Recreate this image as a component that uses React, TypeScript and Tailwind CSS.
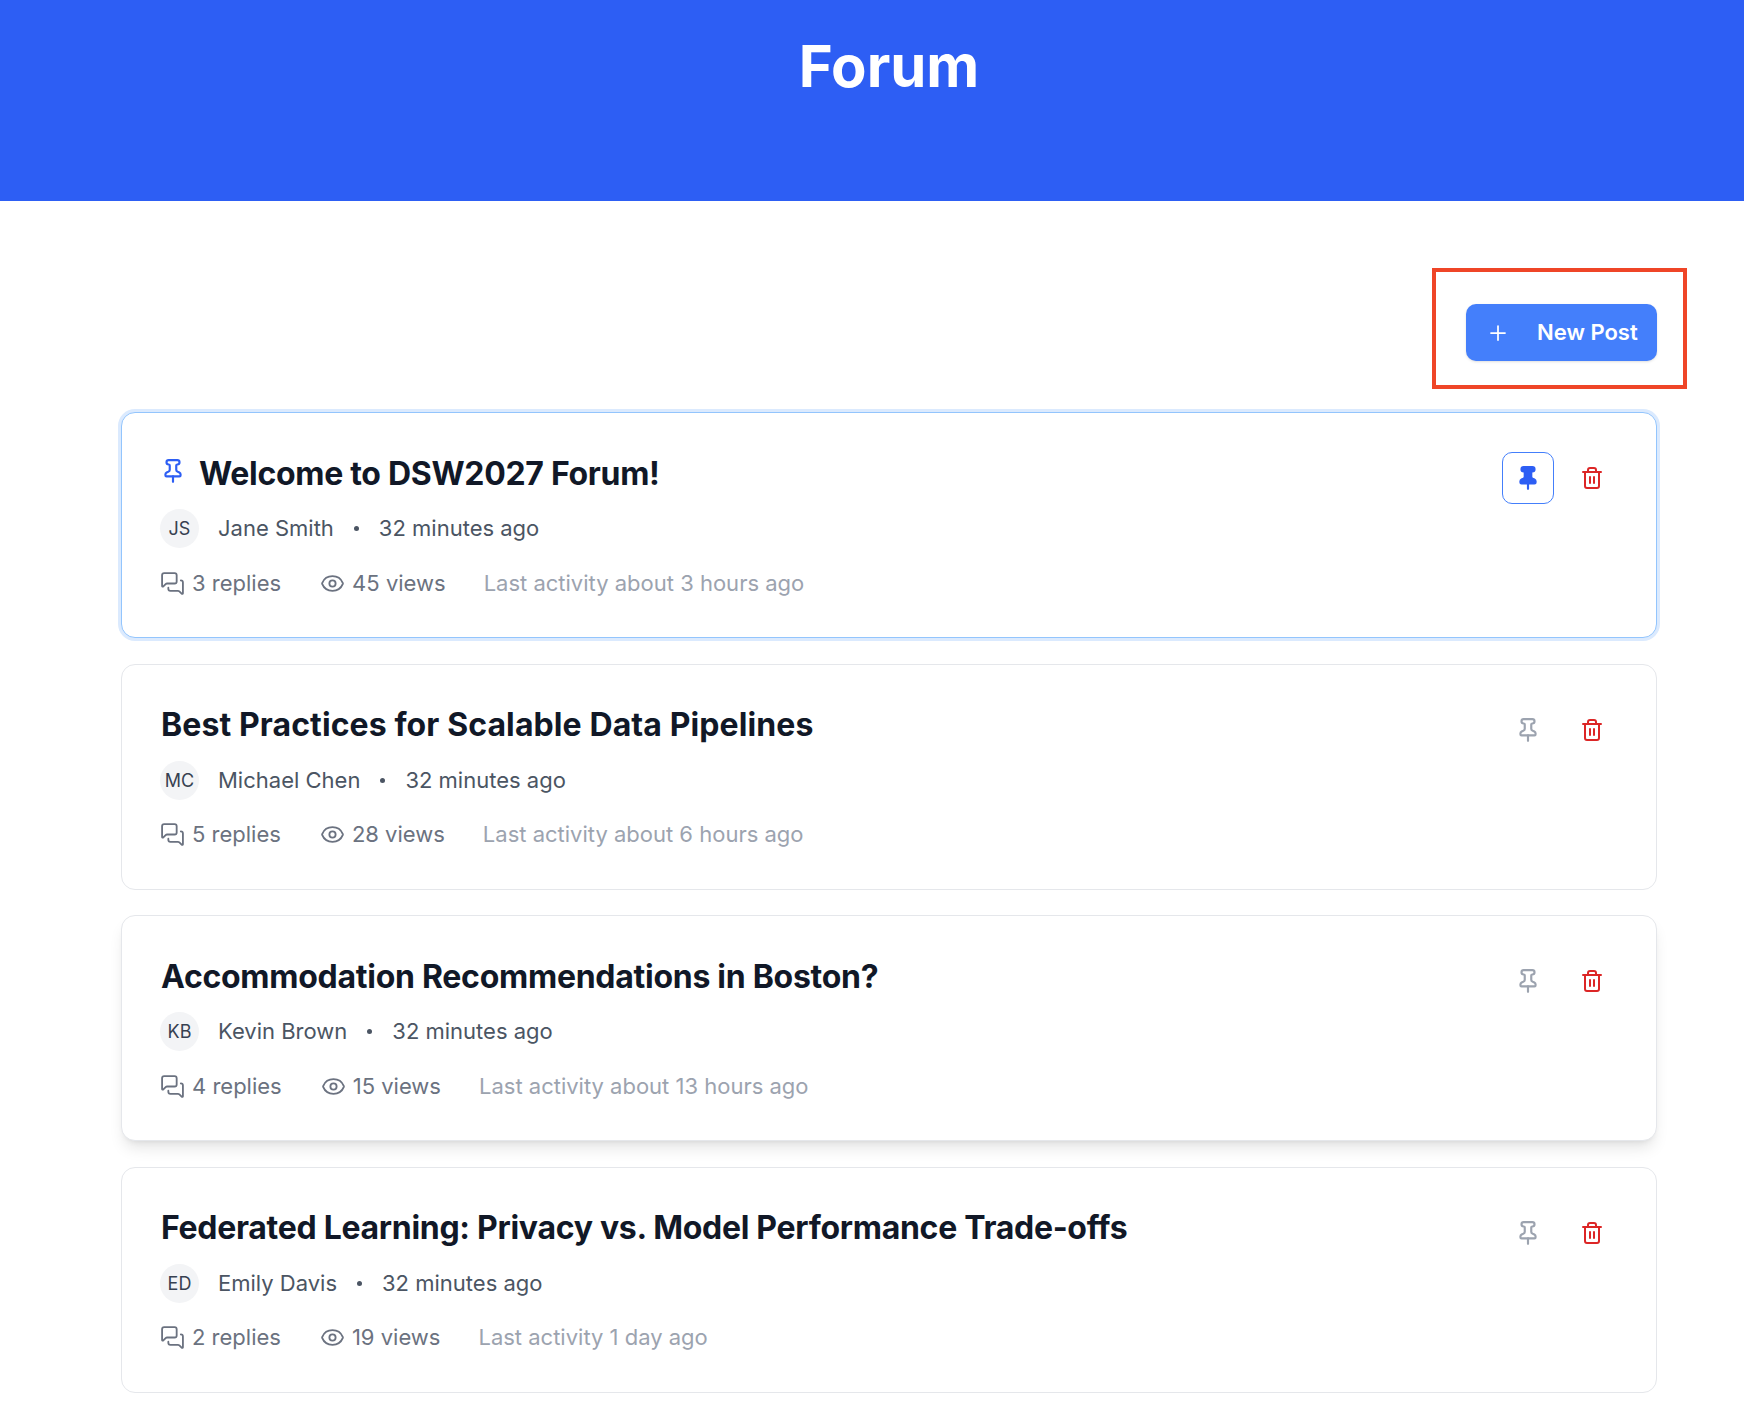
import { Eye, MessagesSquare, Pin, Plus, Trash2 } from "lucide-react";

type Post = {
  title: string;
  titleClass: string;
  initials: string;
  author: string;
  replies: number;
  views: number;
  activity: string;
  pinned?: boolean;
  raised?: boolean;
};

const posts: Post[] = [
  { title: "Welcome to DSW2027 Forum!", titleClass: "tracking-[-0.3px]", initials: "JS", author: "Jane Smith", replies: 3, views: 45, activity: "Last activity about 3 hours ago", pinned: true },
  { title: "Best Practices for Scalable Data Pipelines", titleClass: "tracking-[0.1px]", initials: "MC", author: "Michael Chen", replies: 5, views: 28, activity: "Last activity about 6 hours ago" },
  { title: "Accommodation Recommendations in Boston?", titleClass: "tracking-[-0.27px]", initials: "KB", author: "Kevin Brown", replies: 4, views: 15, activity: "Last activity about 13 hours ago", raised: true },
  { title: "Federated Learning: Privacy vs. Model Performance Trade-offs", titleClass: "tracking-[-0.29px]", initials: "ED", author: "Emily Davis", replies: 2, views: 19, activity: "Last activity 1 day ago" },
];

function PostCard({ post }: { post: Post }) {
  let cardClass = "border-[#e5e7eb]";
  if (post.pinned) cardClass = "border-[#93c5fd] shadow-[0_0_0_3px_#dbeafe]";
  if (post.raised) cardClass = "border-[#e5e7eb] shadow-lg";

  return (
    <div className={`h-[226px] rounded-[14px] border bg-white pl-[38px] pr-[39px] pt-[40px] flex justify-between ${cardClass}`}>
      <div>
        <div className="flex items-center h-[42px]">
          {post.pinned && <Pin className="w-[26px] h-[26px] text-[#2d5ef4] mr-[12px] -mt-[6px]" strokeWidth={2} />}
          <h2 className={`pl-px -mt-[1px] text-[32px] leading-[42px] font-bold text-[#111827] ${post.titleClass}`}>{post.title}</h2>
        </div>
        <div className="flex items-center mt-[14px] h-[39px] text-[22px] text-[#4b5563]">
          <div className="w-[39px] h-[39px] rounded-full bg-[#f3f4f6] flex items-center justify-center text-[18px] text-[#374151]">
            {post.initials}
          </div>
          <span className="ml-[19px]">{post.author}</span>
          <span className="w-[5px] h-[5px] rounded-full bg-[#4b5563] ml-[20px] mr-[20px]" />
          <span>32 minutes ago</span>
        </div>
        <div className="flex items-center mt-[16px] h-[38px] text-[22px] text-[#6b7280]">
          <MessagesSquare className="w-[25px] h-[25px]" strokeWidth={1.75} />
          <span className="ml-[7px]">{post.replies} replies</span>
          <Eye className="w-[25px] h-[25px] ml-[39px]" strokeWidth={1.75} />
          <span className="ml-[7px]">{post.views} views</span>
          <span className="ml-[38px] text-[#9ca3af]">{post.activity}</span>
        </div>
      </div>
      <div className="flex items-start gap-[26px] -mt-[1px] pr-[13px]">
        {post.pinned ? (
          <button className="w-[52px] h-[52px] rounded-[10px] border border-[#447ffb] flex items-center justify-center">
            <Pin className="w-[26px] h-[26px] text-[#2d5ef4]" fill="currentColor" strokeWidth={2} />
          </button>
        ) : (
          <button className="w-[52px] h-[52px] flex items-center justify-center">
            <Pin className="w-[26px] h-[26px] text-[#9ca3af]" strokeWidth={2} />
          </button>
        )}
        <button className="w-[24px] h-[52px] flex items-center justify-center">
          <Trash2 className="w-[26px] h-[26px] text-[#dc2626]" strokeWidth={2} />
        </button>
      </div>
    </div>
  );
}

export default function App() {
  return (
    <div className="min-h-[1406px] bg-white font-['Inter',sans-serif]">
      <header className="h-[201px] bg-[#2d5ef4] pl-[34px] pt-[32px] text-center">
        <h1 className="text-[58px] leading-[68px] font-bold text-white">Forum</h1>
      </header>
      <main className="ml-[121px] w-[1536px] pt-[103px]">
        <div className="flex justify-end mb-[51px]">
          <div className="relative">
            <button className="w-[191px] h-[57px] rounded-[10px] bg-[#447ffb] text-white text-[22px] font-semibold flex items-center pl-[20px] shadow-sm">
              <Plus className="w-[24px] h-[24px]" strokeWidth={1.75} />
              <span className="ml-[27px]">New Post</span>
            </button>
            <div className="absolute -left-[34px] -top-[36px] w-[255px] h-[121px] border-[4px] border-[#ef4527]" />
          </div>
        </div>
        <div className="flex flex-col gap-[25.67px]">
          {posts.map((post) => (
            <PostCard key={post.title} post={post} />
          ))}
        </div>
      </main>
    </div>
  );
}
